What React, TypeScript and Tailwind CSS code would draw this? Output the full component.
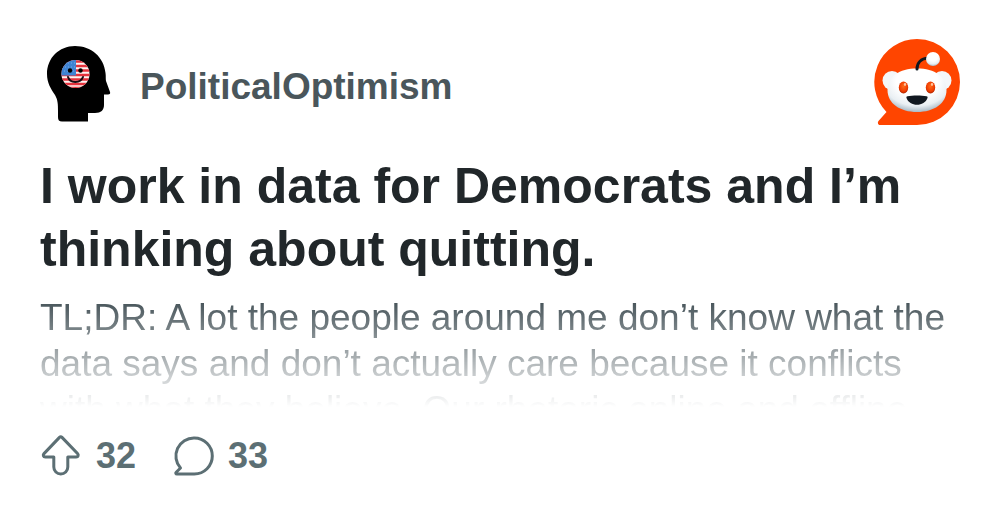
import React from 'react';

interface Post {
  community: string;
  title: string;
  body: string;
  votes: number;
  comments: number;
}

const post: Post = {
  community: 'PoliticalOptimism',
  title: 'I work in data for Democrats and I’m thinking about quitting.',
  body: 'TL;DR: A lot the people around me don’t know what the data says and don’t actually care because it conflicts with what they believe. Our rhetoric online and offline',
  votes: 32,
  comments: 33,
};

const CommunityAvatar: React.FC = () => (
  <svg viewBox="4 6 80 80" className="h-20 w-20 shrink-0" aria-hidden="true">
    <defs>
      <clipPath id="face">
        <circle cx="39.5" cy="38" r="14" />
      </clipPath>
    </defs>
    <path
      d="M39 10C23 10 11 22 11 38c0 9 4 15 8 21 3 5 3 10 3 16v6c0 3 1 4.500 4 4.500h26V77h7c6 0 9-3 9-8v-10.500h4c2 0 2.500-1 2-2.500l-4-11c-.5-2 0-5-.5-8C68 21 55 10 39 10Z"
      fill="#000"
    />
    <g clipPath="url(#face)">
      <rect x="25" y="23" width="30" height="30" fill="#fff4f2" />
      <path
        d="M25 25.500h30M25 30h30M25 34.500h30M25 39h30M25 43.500h30M25 48h30M25 52h30"
        stroke="#e5323c"
        strokeWidth="2.300"
      />
      <rect x="25" y="23" width="15" height="16.500" fill="#3f83d2" />
      <path
        d="M29 31h10M28 35h11M32 27h7"
        stroke="#77aee5"
        strokeWidth="1"
        strokeDasharray="1 2"
      />
    </g>
    <circle cx="34" cy="34.500" r="2.200" fill="#000" />
    <circle cx="44.500" cy="34.500" r="2.200" fill="#000" />
    <path
      d="M32 41c2 6.500 12.500 6.500 15 0"
      fill="none"
      stroke="#160a10"
      strokeWidth="2"
      strokeLinecap="round"
    />
  </svg>
);

const RedditLogo: React.FC = () => (
  <svg viewBox="7 6 88 88" className="h-22 w-22 shrink-0" role="img" aria-label="Reddit">
    <defs>
      <radialGradient id="head" cx="0.5" cy="0.3" r="0.7">
        <stop offset="0.5" stopColor="#fff" />
        <stop offset="0.8" stopColor="#e9eff3" />
        <stop offset="1" stopColor="#a9bac6" />
      </radialGradient>
      <radialGradient id="eye" cx="0.5" cy="0.4" r="0.6">
        <stop offset="0" stopColor="#ff6a1a" />
        <stop offset="0.7" stopColor="#f03c00" />
        <stop offset="1" stopColor="#a82300" />
      </radialGradient>
    </defs>
    <path
      d="M52 7a43 43 0 0 1 0 86H15.500c-2.500 0-3.500-2.500-1.800-4.300L21.500 80A43 43 0 0 1 52 7Z"
      fill="#ff4500"
    />
    <circle cx="27" cy="48.500" r="9.500" fill="#f4f7f9" />
    <circle cx="77" cy="48.500" r="9.500" fill="#f4f7f9" />
    <path
      d="M52 36.500c18 0 29.500 8 29.500 21.500S69 80 52 80 22.500 71.500 22.500 58s11.500-21.500 29.500-21.500Z"
      fill="url(#head)"
    />
    <path
      d="M52 37c0-6 4-10.500 11-11"
      fill="none"
      stroke="#111820"
      strokeWidth="3"
      strokeLinecap="round"
    />
    <circle cx="68" cy="27" r="7" fill="url(#head)" />
    <ellipse cx="38.500" cy="55.500" rx="4.700" ry="6" fill="url(#eye)" />
    <ellipse cx="65.500" cy="55.500" rx="4.700" ry="6" fill="url(#eye)" />
    <ellipse cx="40" cy="52.500" rx="1.200" ry="1.400" fill="#ffc49e" />
    <ellipse cx="67" cy="52.500" rx="1.200" ry="1.400" fill="#ffc49e" />
    <path d="M42.500 64.300c5-1 14-1 19 0 1 .2 1.300.8 1 1.700-3 9-18 9-21 0-.3-.9 0-1.500 1-1.700Z" fill="#111820" />
  </svg>
);

const UpvoteIcon: React.FC = () => (
  <svg
    viewBox="10 9 42 42"
    className="size-[42px] shrink-0 overflow-visible"
    fill="none"
    stroke="currentColor"
    strokeWidth="3"
    strokeLinejoin="round"
    role="img"
    aria-label="Upvotes"
  >
    <path d="M29.500 11.400 14 27.600c-1.300 1.400-.8 3.400 1.300 3.400H23.800v10a7 7 0 0 0 14 0V31h8.400c2.100 0 2.600-2 1.300-3.400L32 11.400c-.8-.8-1.700-.8-2.500 0Z" />
  </svg>
);

const CommentIcon: React.FC = () => (
  <svg
    viewBox="142 9 42 42"
    className="size-[42px] shrink-0 overflow-visible"
    fill="none"
    stroke="currentColor"
    strokeWidth="3"
    strokeLinejoin="round"
    role="img"
    aria-label="Comments"
  >
    <path d="M164.300 12a18 18 0 0 1 0 36H147c-1.300 0-1.600-1-.8-1.800l4.300-4.200A18 18 0 0 1 164.300 12Z" />
  </svg>
);

const App: React.FC = () => {
  return (
    <main className="min-h-screen bg-white px-10 pt-[38px] font-['Liberation_Sans',Arial,sans-serif]">
      <header className="flex items-center justify-between">
        <div className="flex items-center gap-5">
          <CommunityAvatar />
          <span className="pt-2.5 text-[37px] leading-[46px] font-bold text-[#4a565b]">{post.community}</span>
        </div>
        <RedditLogo />
      </header>

      <h1 className="mt-[29px] text-[50px] leading-[63px] font-bold text-[#21272a]">{post.title}</h1>

      <div className="mt-3.5 h-[112px] overflow-hidden mask-linear-180 mask-linear-from-0% mask-linear-to-100%">
        <p className="text-[37px] leading-[46px] text-[#3c4a50]">{post.body}</p>
      </div>

      <footer className="mt-7 flex items-center gap-9 text-[36px] leading-[42px] font-bold text-[#5c6f74]">
        <button type="button" className="flex items-center gap-3.5">
          <UpvoteIcon />
          {post.votes}
        </button>
        <button type="button" className="flex items-center gap-3.5">
          <CommentIcon />
          {post.comments}
        </button>
      </footer>
    </main>
  );
};

export default App;
